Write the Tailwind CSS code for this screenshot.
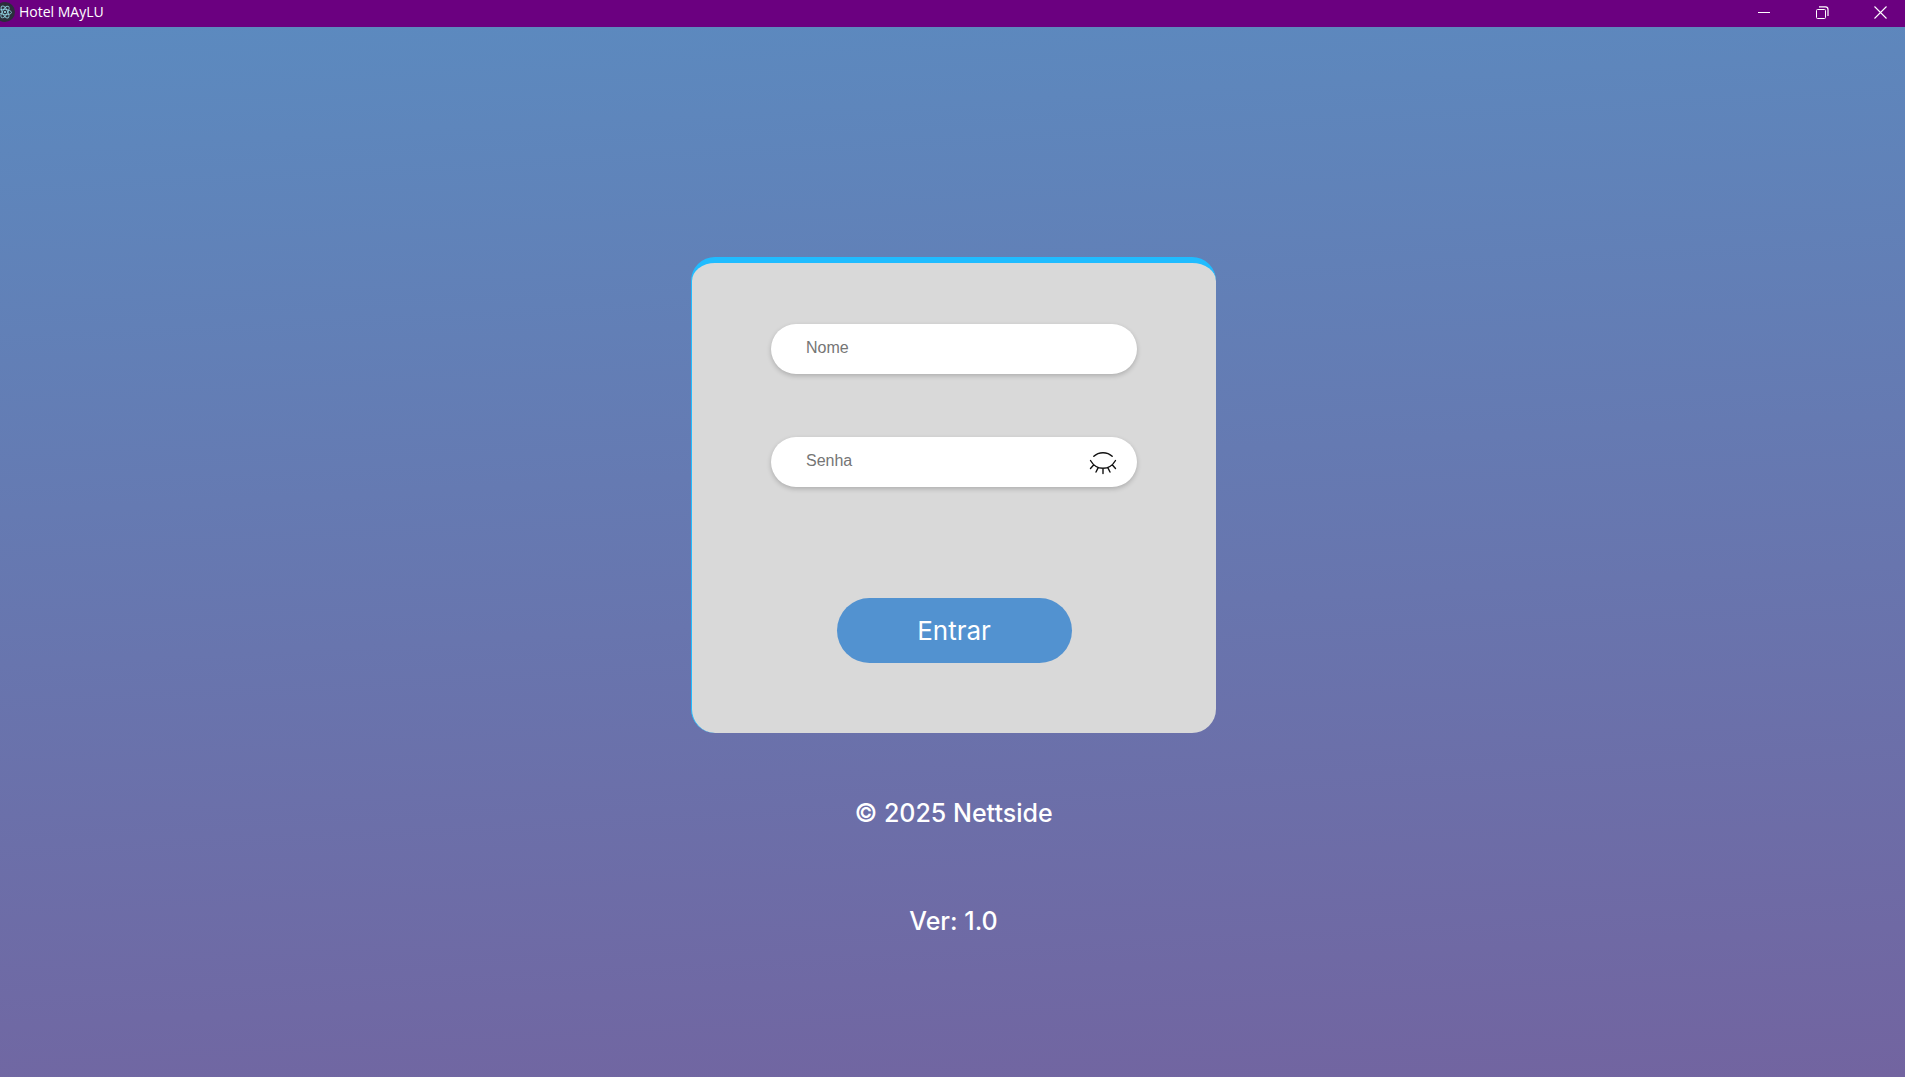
<!DOCTYPE html>
<html lang="pt">
<head>
<meta charset="utf-8">
<meta name="viewport" content="width=device-width, initial-scale=1">
<title>Hotel MAyLU</title>
<script src="https://cdn.jsdelivr.net/npm/@tailwindcss/browser@4"></script>
</head>
<body class="flex min-h-screen flex-col bg-[linear-gradient(177deg,#5b8bc0_0%,#7264a0_100%)] font-['Inter',sans-serif] text-white">
  <header class="flex h-[27px] items-center justify-between bg-[#6b0080] pr-[18px] pb-[3px]">
    <div class="flex items-center gap-1">
      <svg class="-ml-[5px] size-5" viewBox="0 0 20 20" fill="none" aria-hidden="true">
        <circle cx="10" cy="10" r="10" fill="#2b2e3b"/>
        <g stroke="#9feaf9" stroke-opacity=".75" stroke-width=".9">
          <ellipse cx="10" cy="10" rx="6.5" ry="2.6" transform="rotate(5 10 10)"/>
          <ellipse cx="10" cy="10" rx="6.5" ry="2.6" transform="rotate(62 10 10)"/>
          <ellipse cx="10" cy="10" rx="6.5" ry="2.6" transform="rotate(120 10 10)"/>
        </g>
        <circle cx="10" cy="10" r="1" fill="#9feaf9"/>
      </svg>
      <h1 class="font-['Open_Sans',sans-serif] text-[14px] leading-5">Hotel MAyLU</h1>
    </div>
    <div class="flex items-center gap-[45px]">
      <button type="button" aria-label="Minimizar"><svg class="block size-[13px]" viewBox="0 0 13 13" fill="none" stroke="#fff"><path d="M0 6.5H12"/></svg></button>
      <button type="button" aria-label="Restaurar"><svg class="block size-[13px]" viewBox="0 0 13 13" fill="none" stroke="#fff"><rect x=".5" y="3.500" width="9" height="9" rx="1"/><path d="M3 .9H9.500Q12 .9 12 3.500V10" stroke-width="1.200"/></svg></button>
      <button type="button" aria-label="Fechar"><svg class="block size-[13px]" viewBox="0 0 13 13" fill="none" stroke="#fff" stroke-width="1.100"><path d="M.5.5l12 12M12.500.5l-12 12"/></svg></button>
    </div>
  </header>

  <main class="flex flex-1 flex-col items-center pt-[230px] pl-0.5">
    <form class="flex w-[525px] flex-col items-center rounded-[24px] border-t-[6px] border-l border-[#20bcff] bg-[#d9d9d9] pt-[61px] pb-[70px]">
      <input type="text" aria-label="Nome" placeholder="Nome" class="h-[50px] w-[366px] rounded-full bg-white px-[35px] pb-0.5 font-['Liberation_Sans',sans-serif] text-base text-black shadow-[0_2px_5px_rgba(0,0,0,0.2)] outline-none placeholder:text-[#757575]">
      <div class="relative mt-[63px]">
        <input type="password" aria-label="Senha" placeholder="Senha" class="block h-[50px] w-[366px] rounded-full bg-white pr-16 pb-0.5 pl-[35px] font-['Liberation_Sans',sans-serif] text-base text-black shadow-[0_2px_5px_rgba(0,0,0,0.2)] outline-none placeholder:text-[#757575]">
        <button type="button" aria-label="Mostrar senha" class="absolute top-[14px] right-5">
          <svg class="block h-6 w-7" viewBox="0 0 28 24" fill="none" stroke="#111" stroke-width="1.400" stroke-linecap="round"><path d="M4.800 5.300Q8.500 1.700 14 1.700T23.200 5.300M1.500 9.500Q6 17.300 14 17.300T26.500 9.500M4.800 13.800L1.500 17.500M9.200 16.600L7 21M14 17.300V22.500M18.800 16.600L21 21M23.200 13.800L26.500 17.500"/></svg>
        </button>
      </div>
      <button type="submit" class="mt-[111px] h-[65px] w-[235px] rounded-full bg-[#5292d0] text-[26px]">Entrar</button>
    </form>
    <footer class="flex flex-col items-center gap-[68px] pt-[60px] text-[25px] leading-10 font-medium">
      <p>© 2025 Nettside</p>
      <p>Ver: 1.0</p>
    </footer>
  </main>
</body>
</html>
